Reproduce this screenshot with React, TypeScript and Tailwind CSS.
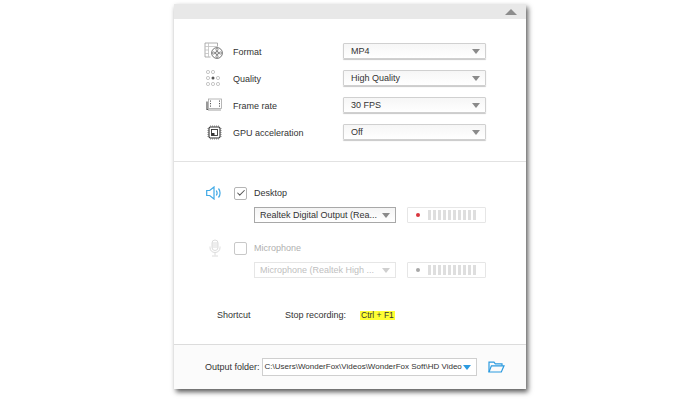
import { Check } from "lucide-react";
import React from "react";

function Arrow({ color = "#8a8a8a" }: { color?: string }) {
  return (
    <svg width="8" height="5" viewBox="0 0 8 5" className="shrink-0">
      <path d="M0 0H8L4 5Z" fill={color} />
    </svg>
  );
}

function FormatIcon() {
  return (
    <svg width="20" height="18" viewBox="0 0 20 18" fill="none" stroke="#9a9a9a" strokeWidth="0.8">
      <path d="M13.5 4.5V1H1V15H6.5" />
      <path d="M4.5 1V15M1 4.5H4.5M1 8H4.5M1 11.5H4.5M4.5 4.5H13.5" stroke="#c0c0c0" />
      <circle cx="13" cy="11" r="5.4" stroke="#666" strokeWidth="0.9" />
      <circle cx="13" cy="11" r="1.5" stroke="#666" strokeWidth="0.9" />
      <circle cx="13" cy="7.6" r="1.1" stroke="#777" />
      <circle cx="13" cy="14.4" r="1.1" stroke="#777" />
      <circle cx="9.6" cy="11" r="1.1" stroke="#777" />
      <circle cx="16.4" cy="11" r="1.1" stroke="#777" />
    </svg>
  );
}

function QualityIcon() {
  const dots: [number, number][] = [
    [2, 2], [7, 2],
    [2, 8], [12, 8],
    [2, 14], [7, 14], [12, 14],
  ];
  return (
    <svg width="16" height="17" viewBox="0 0 16 17" fill="none">
      {dots.map(([x, y]) => (
        <circle key={`${x}-${y}`} cx={x} cy={y} r="1.6" stroke="#b0b0b0" strokeWidth="0.7" />
      ))}
      <circle cx="7" cy="8" r="1.5" fill="#555" />
    </svg>
  );
}

function FrameIcon() {
  return (
    <svg width="17" height="14" viewBox="0 0 17 14" fill="none">
      <path d="M1 3.5V11.5H3" stroke="#555" strokeWidth="1.2" />
      <rect x="2.5" y="1" width="13" height="9.5" fill="#fff" stroke="#a5a5a5" strokeWidth="0.8" />
      <path d="M4.5 2.5V9.5M13.5 2.5V9.5" stroke="#555" strokeWidth="1" strokeDasharray="1.2 1.3" />
      <path d="M2 12H15" stroke="#c4c4c4" strokeWidth="1.6" />
    </svg>
  );
}

function GpuIcon() {
  return (
    <svg width="15" height="15" viewBox="0 0 15 15" fill="none">
      <path d="M3.5 0V15M5.5 0V15M7.5 0V15M9.5 0V15M11.5 0V15M0 3.5H15M0 5.5H15M0 7.5H15M0 9.5H15M0 11.5H15" stroke="#b5b5b5" strokeWidth="0.8" />
      <rect x="2" y="2" width="11" height="11" rx="1.5" fill="#fff" stroke="#333" strokeWidth="1.1" />
      <rect x="4.5" y="4.5" width="6" height="6" fill="#fff" stroke="#333" strokeWidth="0.9" />
      <rect x="4.5" y="8" width="3" height="2.5" fill="#333" />
    </svg>
  );
}

function SpeakerIcon() {
  return (
    <svg width="17" height="14" viewBox="0 0 17 14" fill="none" stroke="#3fa9e6" strokeWidth="1.2">
      <path d="M.7 4.5H3.7L8 1V13L3.7 9.5H.7Z" />
      <path d="M10.3 4.5C11.3 6 11.3 8 10.3 9.5" />
      <path d="M12.5 2.5C14.6 5 14.6 9 12.5 11.5" />
    </svg>
  );
}

function MicIcon() {
  return (
    <svg width="12" height="18" viewBox="0 0 12 18" fill="none" stroke="#dcdcdc" strokeWidth="1">
      <rect x="3" y="1" width="6" height="10.5" rx="3" />
      <path d="M3 4H9M3 6H9M3 8H9" />
      <path d="M1 7.5V8.5C1 11.5 3 13.5 6 13.5C9 13.5 11 11.5 11 8.5V7.5M6 13.5V16.5M3 17H9" />
    </svg>
  );
}

function FolderIcon() {
  return (
    <svg width="17" height="12" viewBox="0 0 17 12" fill="none" stroke="#2c9be0" strokeWidth="1.2">
      <path d="M1 11V1.2H6L7.3 2.8H14V4.8" />
      <path d="M1 11H13.3L16 4.8H3.4L1 11Z" />
    </svg>
  );
}

function Select({ label }: { label: string }) {
  return (
    <div className="flex items-center justify-between h-4 w-[143px] pl-[7px] pr-[5px] pt-px rounded-[1px] border border-[#d0d0d0] shadow-[0_1px_1px_#c8c8c8] bg-gradient-to-b from-[#f6f6f6] to-[#ffffff] text-[#333]">
      <span className="whitespace-nowrap">{label}</span>
      <Arrow />
    </div>
  );
}

function SettingRow({ icon, label, value }: { icon: React.ReactNode; label: string; value: string }) {
  return (
    <div className="flex items-center h-4">
      <div className="w-[20px] flex justify-center">{icon}</div>
      <span className="ml-[9px] w-[110px] pt-[2px] text-[#333]">{label}</span>
      <Select label={value} />
    </div>
  );
}

function Meter({ dot }: { dot: string }) {
  return (
    <div className="flex items-center h-[16px] w-[79px] pl-[8px] border border-[#e6e6e6] rounded-[1px] ml-[11px]">
      <span className={`w-1 h-1 rounded-full ${dot}`} />
      <div className="flex gap-[2px] ml-[8px]">
        {Array.from({ length: 10 }).map((_, i) => (
          <span key={i} className="w-[3px] h-[10px] bg-[#dedede]" />
        ))}
      </div>
    </div>
  );
}

export default function App() {
  return (
    <div className="w-[700px] h-[400px] bg-white overflow-hidden pt-[4px] text-[9px] leading-none font-['Liberation_Sans',Arial,sans-serif]">
      <div className="mx-auto w-[352px] h-[385px] flex flex-col bg-white shadow-[2px_3px_5px_rgba(0,0,0,0.65)]">
        {/* collapse bar */}
        <div className="h-[15px] shrink-0 bg-[#e8e8e8] flex items-center justify-end pr-[9px]">
          <svg width="12" height="6" viewBox="0 0 12 6">
            <path d="M0 6H12L6 0Z" fill="#8c8c8c" />
          </svg>
        </div>

        {/* video settings */}
        <div className="h-[143px] shrink-0 border-b border-[#e2e2e2] pt-[24px] pl-[30px] flex flex-col gap-[11px]">
          <SettingRow icon={<FormatIcon />} label="Format" value="MP4" />
          <SettingRow icon={<QualityIcon />} label="Quality" value="High Quality" />
          <SettingRow icon={<FrameIcon />} label="Frame rate" value="30 FPS" />
          <SettingRow icon={<GpuIcon />} label="GPU acceleration" value="Off" />
        </div>

        {/* audio */}
        <div className="pl-[32px] pt-[24px] flex-1">
          <div className="flex items-center h-[14px]">
            <div className="w-[17px]"><SpeakerIcon /></div>
            <span className="w-[13px] h-[13px] ml-[11px] border border-[#b5b5b5] rounded-[2px] flex items-center justify-center">
              <Check size={10} color="#555" strokeWidth={2.5} />
            </span>
            <span className="ml-[7px] text-[#333]">Desktop</span>
          </div>
          <div className="flex items-center mt-[7px] ml-[48px]">
            <div className="flex items-center justify-between h-4 w-[142px] pl-[5px] pr-[5px] border border-[#a8a8a8] bg-gradient-to-b from-[#f4f4f4] to-white text-[#333]">
              <span className="whitespace-nowrap">Realtek Digital Output (Rea...</span>
              <Arrow />
            </div>
            <Meter dot="bg-[#d9363e]" />
          </div>

          <div className="flex items-center h-[14px] mt-[18px]">
            <div className="w-[17px] flex justify-center"><MicIcon /></div>
            <span className="w-[13px] h-[13px] ml-[11px] border border-[#c8c8c8] rounded-[2px]" />
            <span className="ml-[7px] text-[#b0b0b0]">Microphone</span>
          </div>
          <div className="flex items-center mt-[7px] ml-[48px]">
            <div className="flex items-center justify-between h-4 w-[142px] pl-[5px] pr-[5px] border border-[#e6e6e6] text-[#c0c0c0]">
              <span className="whitespace-nowrap">Microphone (Realtek High ...</span>
              <Arrow color="#cfcfcf" />
            </div>
            <Meter dot="bg-[#a8a8a8]" />
          </div>

          <div className="flex items-center mt-[33px] text-[#333]">
            <span className="ml-[11px] w-[68px]">Shortcut</span>
            <span className="w-[75px]">Stop recording:</span>
            <span className="bg-[#ffff33] px-px text-[8.5px]">Ctrl + F1</span>
          </div>
        </div>

        {/* output folder */}
        <div className="h-[45px] shrink-0 border-t border-[#dcdcdc] bg-[#fbfbfb] flex items-center pl-[31px] text-[#333]">
          <span className="whitespace-nowrap">Output folder:</span>
          <div className="flex items-center h-[18px] w-[215px] ml-[2px] pl-[2px] pr-[5px] border border-[#cfcfcf] bg-white text-[8px]">
            <span className="whitespace-nowrap">C:\Users\WonderFox\Videos\WonderFox Soft\HD Video</span>
            <span className="ml-auto"><Arrow color="#2c9be0" /></span>
          </div>
          <div className="ml-[11px]"><FolderIcon /></div>
        </div>
      </div>
    </div>
  );
}
